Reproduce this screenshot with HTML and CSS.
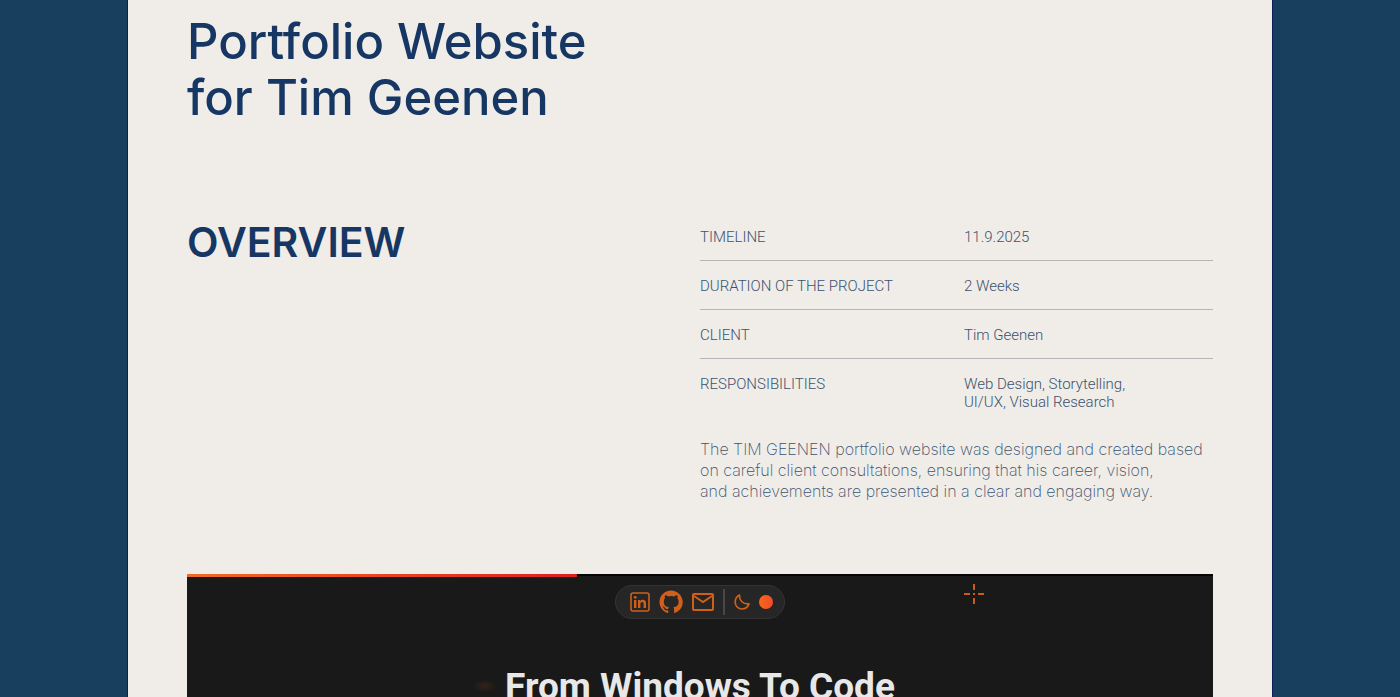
FILE: index.html
```html
<!DOCTYPE html>
<html lang="en">
<head>
<meta charset="utf-8">
<meta name="viewport" content="width=device-width, initial-scale=1">
<title>Portfolio Website for Tim Geenen</title>
<link rel="stylesheet" href="styles.css">
</head>
<body>
<main class="page">
  <h1 class="title">Portfolio Website<br>for Tim Geenen</h1>
  <section class="overview">
    <h2 class="overview-title">OVERVIEW</h2>
    <div class="details">
      <table class="facts">
        <tbody>
          <tr><th scope="row">TIMELINE</th><td>11.9.2025</td></tr>
          <tr><th scope="row">DURATION OF THE PROJECT</th><td>2 Weeks</td></tr>
          <tr><th scope="row">CLIENT</th><td>Tim Geenen</td></tr>
          <tr><th scope="row">RESPONSIBILITIES</th><td>Web Design, Storytelling,<br>UI/UX, Visual Research</td></tr>
        </tbody>
      </table>
      <p class="summary">The TIM GEENEN portfolio website was designed and created based<br>on careful client consultations, ensuring that his career, vision,<br>and achievements are presented in a clear and engaging way.</p>
    </div>
  </section>
  <section class="preview">
    <div class="progress"></div>
    <nav class="toolbar" aria-label="Contact">
      <a class="tool" href="#linkedin" aria-label="LinkedIn">
        <svg width="20" height="20" viewBox="0 0 20 20" fill="none">
          <rect x="1" y="1" width="18" height="18" rx="2" stroke="currentColor" stroke-width="1.6"/>
          <path d="M4 8h2.4v8H4zM8 8h2.3v1.2C10.9 8.300 11.700 7.800 12.800 7.800c2.300 0 3.200 1.500 3.200 3.700V16h-2.400v-4c0-1.200-.4-2-1.400-2-1.200 0-1.800.8-1.800 2.100V16H8z" fill="currentColor"/>
          <circle cx="5.200" cy="5.300" r="1.400" fill="currentColor"/>
        </svg>
      </a>
      <a class="tool" href="#github" aria-label="GitHub">
        <svg width="24" height="24" viewBox="0 0 24 24" fill="currentColor"><path d="M12 .5C5.600.5.500 5.700.500 12.100c0 5.100 3.300 9.400 7.900 11 .6.100.8-.3.800-.6v-2.200c-3.200.7-3.900-1.400-3.900-1.400-.5-1.300-1.300-1.700-1.300-1.700-1-.7.100-.7.100-.7 1.200.1 1.800 1.200 1.800 1.200 1 1.800 2.700 1.300 3.400 1 .1-.8.4-1.300.7-1.600-2.600-.3-5.200-1.300-5.200-5.700 0-1.300.4-2.300 1.200-3.100-.1-.3-.5-1.500.1-3.100 0 0 1-.3 3.200 1.200a11 11 0 0 1 5.800 0c2.200-1.500 3.200-1.200 3.200-1.200.6 1.600.2 2.800.1 3.100.7.800 1.200 1.800 1.200 3.100 0 4.400-2.700 5.400-5.300 5.700.4.400.8 1.100.8 2.200v3.200c0 .3.200.7.800.6a11.600 11.600 0 0 0 7.900-11C23.500 5.700 18.400.5 12 .5Z"/></svg>
      </a>
      <a class="tool" href="#mail" aria-label="Email">
        <svg width="22" height="18" viewBox="0 0 22 18" fill="none" stroke="currentColor" stroke-width="2"><rect x="1" y="1" width="20" height="16" rx="1"/><path d="m2 3 9 6 9-6"/></svg>
      </a>
      <span class="divider"></span>
      <button class="tool" type="button" aria-label="Dark mode">
        <svg width="16" height="16" viewBox="0 0 16 16" fill="none" stroke="currentColor" stroke-width="1.700" stroke-linejoin="round"><path d="M5.500 1C5 5.800 8.600 10.500 15 9.900 13.800 13 11.300 15 8 15a6.800 6.800 0 0 1-6.800-6.800C1.200 4.800 3 2.200 5.500 1Z"/></svg>
      </button>
      <button class="dot" type="button" aria-label="Accent colour"></button>
    </nav>
    <svg class="crosshair" width="22" height="22" viewBox="0 0 22 22" fill="none" stroke="currentColor" stroke-width="2"><path d="M11 1v6M11 15v6M1 11h6M15 11h6M10 11h2"/></svg>
    <h2 class="headline">From Windows To Code</h2>
  </section>
</main>
</body>
</html>
```
FILE: styles.css
```css
* {
  box-sizing: border-box;
}

body {
  margin: 0;
  background: #193f5e;
  color: #193e5f;
  font-family: "Liberation Sans", sans-serif;
}

.page {
  display: flex;
  flex-direction: column;
  height: 100vh;
  margin: 0 128px;
  padding: 14px 59px 0;
  overflow: hidden;
  background: #f0ece7;
  box-shadow: 0 0 0 1px #0b2056;
}

.title {
  margin: 0;
  color: #163763;
  font-family: Inter, sans-serif;
  font-size: 49px;
  font-weight: 500;
  line-height: 56px;
}

.overview {
  display: grid;
  grid-template-columns: 1fr 1fr;
  margin-top: 86px;
}

.overview-title {
  margin: 6px 0 0;
  color: #163763;
  font-family: Inter, sans-serif;
  font-size: 41px;
  font-weight: 600;
  line-height: 48px;
}

.facts {
  width: 100%;
  border-collapse: collapse;
  table-layout: fixed;
  color: #3a5370;
  font-family: Roboto, sans-serif;
  font-size: 15px;
  font-weight: 300;
  line-height: 18px;
}

.facts th,
.facts td {
  padding: 16px 0 14px;
  text-align: left;
  vertical-align: top;
  font-weight: 300;
}

.facts th {
  width: 264px;
}

.facts tr + tr {
  border-top: 1px solid #b5b5b8;
}

.summary {
  margin: 14px 0 0;
  color: #3a5370;
  font-family: Inter, sans-serif;
  font-size: 16px;
  font-weight: 200;
  line-height: 21px;
  white-space: nowrap;
}

.preview {
  position: relative;
  display: flex;
  flex: 1;
  flex-direction: column;
  align-items: center;
  margin-top: 72px;
  background: radial-gradient(ellipse 12px 6px at 29% 112px, #35221a, transparent) #191919;
}

.progress {
  align-self: stretch;
  height: 3px;
  background:
    linear-gradient(90deg, #f06a24, #dc2020) left / 38% 100% no-repeat,
    linear-gradient(#050505 66%, #191919 66%);
}

.toolbar {
  display: flex;
  flex-shrink: 0;
  align-items: center;
  gap: 9px;
  height: 34px;
  margin-top: 8px;
  padding: 0 11px 0 14px;
  border: 1px solid #343434;
  border-radius: 17px;
  background: #262626;
}

.tool {
  display: flex;
  padding: 0;
  border: 0;
  background: none;
  color: #cf601c;
}

.divider {
  width: 2px;
  height: 26px;
  background: #474747;
}

.dot {
  width: 14px;
  height: 14px;
  padding: 0;
  border: 0;
  border-radius: 50%;
  background: linear-gradient(90deg, #fa6817, #f04b2c);
}

.crosshair {
  position: absolute;
  top: 9px;
  left: calc(76% - 4px);
  color: #c85c18;
}

.headline {
  flex-shrink: 0;
  margin: 47px 0 0;
  color: #e8e8e8;
  font-family: Roboto, sans-serif;
  font-size: 37px;
  font-weight: 700;
  line-height: 42px;
}
```
